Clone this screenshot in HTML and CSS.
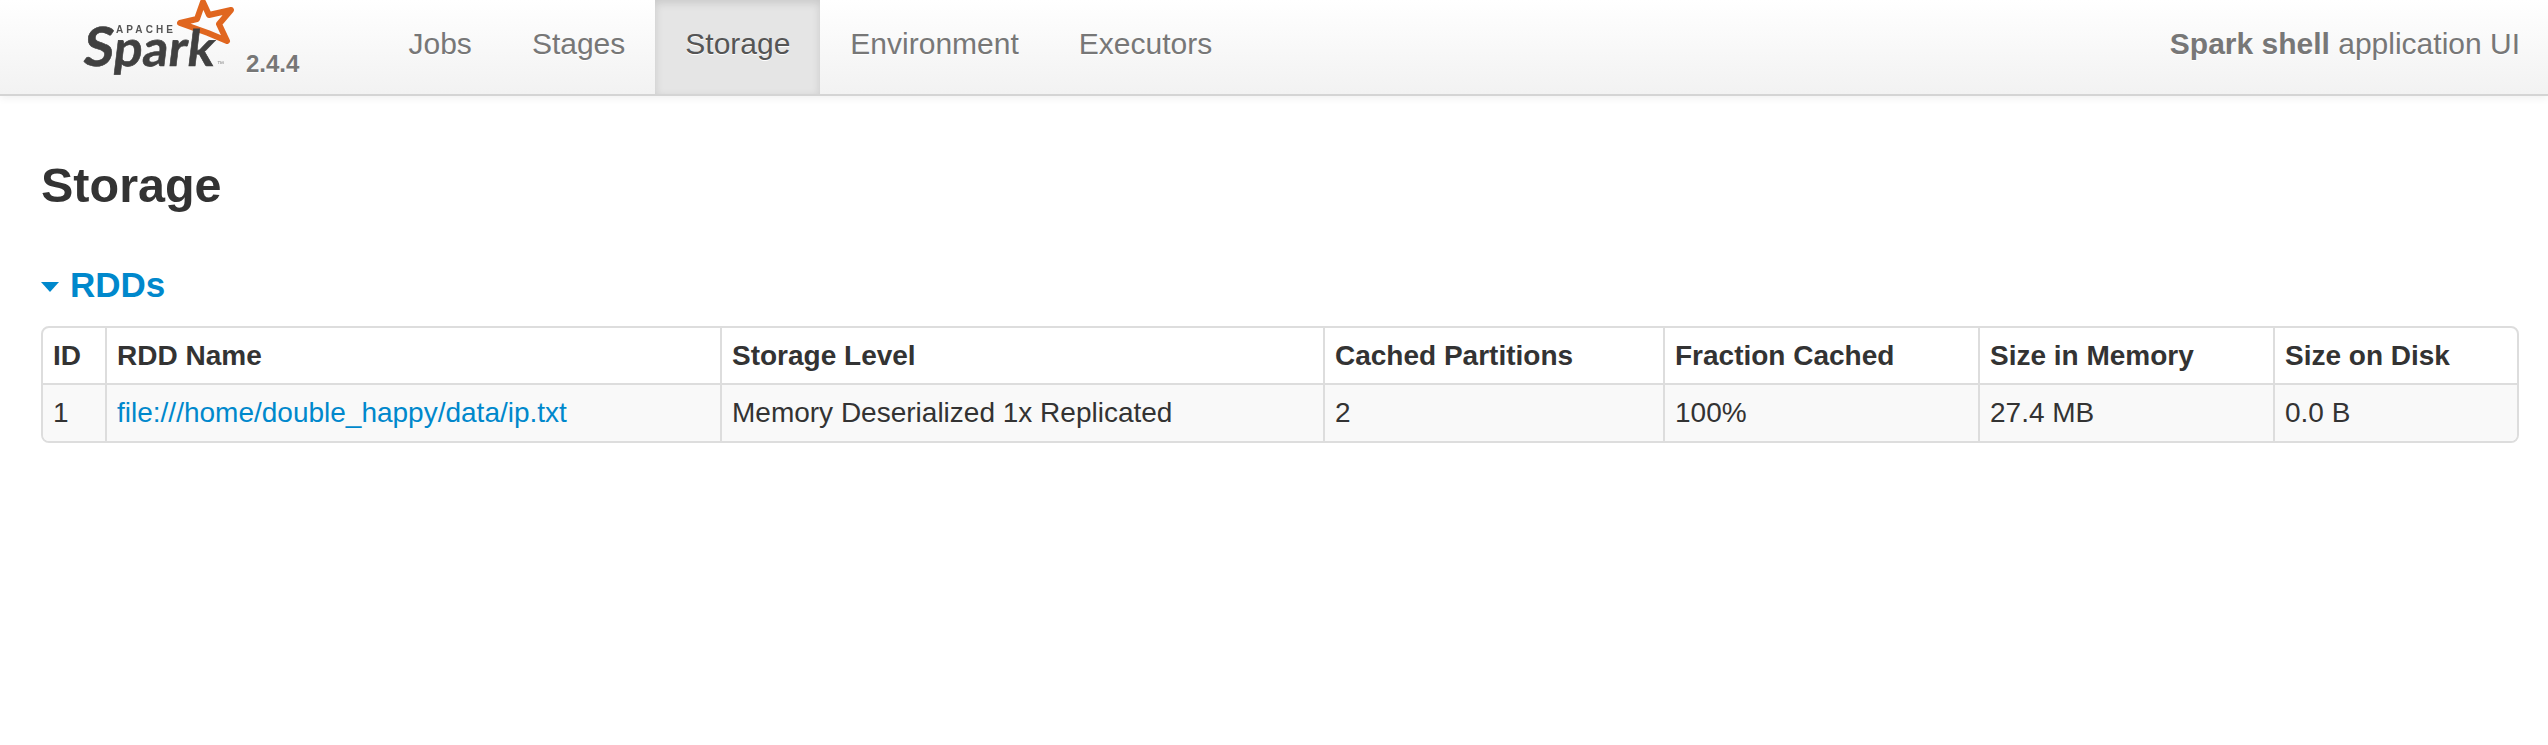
FILE: index.html
```html
<!DOCTYPE html>
<html lang="en">
<head>
    <meta charset="UTF-8">
    <title>Storage</title>
    <link rel="stylesheet" href="styles.css">
</head>
<body>
    <header class="navbar">
        <a class="brand" href="#">
            <svg class="brand__logo" width="155" height="92" viewBox="0 0 155 92">
                <polygon class="brand__star" points="122,2 128,15 150,10 138,24 146,41 127,33 99,23 116,19"/>
                <text class="brand__apache" x="35" y="33" textLength="57" lengthAdjust="spacing">APACHE</text>
                <text class="brand__name" x="9" y="66" textLength="131" lengthAdjust="spacingAndGlyphs" transform="skewX(-7)"><tspan class="brand__initial">S</tspan>park</text>
                <text class="brand__tm" x="136" y="66">™</text>
            </svg>
            <span class="brand__version">2.4.4</span>
        </a>
        <ul class="nav">
            <li><a href="#">Jobs</a></li>
            <li><a href="#">Stages</a></li>
            <li class="nav__active"><a href="#">Storage</a></li>
            <li><a href="#">Environment</a></li>
            <li><a href="#">Executors</a></li>
        </ul>
        <p class="navbar__text"><strong>Spark shell</strong> application UI</p>
    </header>
    <main class="main">
        <h3 class="main__title">Storage</h3>
        <h4 class="section__title"><span class="section__arrow"></span><a href="#">RDDs</a></h4>
        <div class="table__box">
            <table class="table">
                <thead>
                    <tr>
                        <th class="col__id">ID</th>
                        <th class="col__name">RDD Name</th>
                        <th class="col__level">Storage Level</th>
                        <th class="col__parts">Cached Partitions</th>
                        <th class="col__fraction">Fraction Cached</th>
                        <th class="col__memory">Size in Memory</th>
                        <th>Size on Disk</th>
                    </tr>
                </thead>
                <tbody>
                    <tr>
                        <td>1</td>
                        <td><a href="#">file:///home/double_happy/data/ip.txt</a></td>
                        <td>Memory Deserialized 1x Replicated</td>
                        <td>2</td>
                        <td>100%</td>
                        <td>27.4 MB</td>
                        <td>0.0 B</td>
                    </tr>
                </tbody>
            </table>
        </div>
    </main>
</body>
</html>
```
FILE: styles.css
```css
body {
    font-family: "Liberation Sans", Arial, sans-serif;
    margin: 0;
    color: #333;
    background-color: #fff;
}
a {
    text-decoration: none;
    color: #08c;
}
.navbar {
    display: flex;
    height: 94px;
    border-bottom: 2px solid #d4d4d4;
    background-image: linear-gradient(to bottom, #fff, #f2f2f2);
    box-shadow: 0 2px 8px rgba(0, 0, 0, 0.065);
}
.brand {
    display: flex;
    width: 378px;
    box-sizing: border-box;
    padding-left: 81px;
}
.brand__logo {
    flex: none;
    overflow: visible;
    filter: blur(0.6px);
}
.brand__star {
    fill: none;
    stroke: #e0661f;
    stroke-width: 6;
    stroke-linejoin: round;
}
.brand__apache {
    font-size: 10px;
    font-weight: bold;
    fill: #555;
}
.brand__name {
    font-family: "Lato", sans-serif;
    font-size: 50px;
    font-weight: bold;
    fill: #404040;
    stroke: #404040;
    stroke-width: 0.6;
}
.brand__initial {
    font-size: 54px;
}
.brand__tm {
    font-size: 7px;
    fill: #888;
}
.brand__version {
    margin: 52px 0 0 10px;
    font-size: 24px;
    line-height: 24px;
    font-weight: bold;
    color: #777;
    text-shadow: 0 1px 0 #fff;
}
.nav {
    display: flex;
    margin: 0;
    padding: 0 0 0 0.5px;
    list-style: none;
}
.nav a {
    display: block;
    padding: 0 30px;
    font-size: 30px;
    line-height: 88px;
    height: 94px;
    color: #777;
    text-shadow: 0 1px 0 #fff;
}
.nav__active a {
    color: #555;
    background-color: #e5e5e5;
    box-shadow: inset 0 3px 8px rgba(0, 0, 0, 0.125);
}
.navbar__text {
    margin: 0 28px 0 auto;
    font-size: 30px;
    line-height: 88px;
    color: #777;
    text-shadow: 0 1px 0 #fff;
}
.main {
    padding: 0 29px 0 41px;
}
.main__title {
    margin: 0;
    padding-top: 55px;
    font-size: 48.5px;
    line-height: 68px;
    font-weight: bold;
}
.section__title {
    display: flex;
    align-items: center;
    margin: 41px 0 0;
    height: 50px;
    font-size: 35px;
    font-weight: bold;
}
.section__arrow {
    width: 0;
    height: 0;
    margin: 4px 11px 0 0;
    border-top: 10px solid #08c;
    border-left: 9px solid transparent;
    border-right: 9px solid transparent;
}
.table__box {
    margin-top: 16px;
    border: 2px solid #ddd;
    border-radius: 8px;
    overflow: hidden;
}
.table {
    width: 100%;
    table-layout: fixed;
    border-collapse: collapse;
    font-size: 28px;
}
.table th,
.table td {
    height: 56px;
    padding: 0 10px;
    text-align: left;
    border-left: 2px solid #ddd;
    box-sizing: border-box;
}
.table th:first-child,
.table td:first-child {
    border-left: 0;
}
.table td {
    height: 57px;
    border-top: 2px solid #ddd;
    background-color: #f9f9f9;
}
.col__id { width: 63px; }
.col__name { width: 615px; }
.col__level { width: 603px; }
.col__parts { width: 340px; }
.col__fraction { width: 315px; }
.col__memory { width: 295px; }
```
